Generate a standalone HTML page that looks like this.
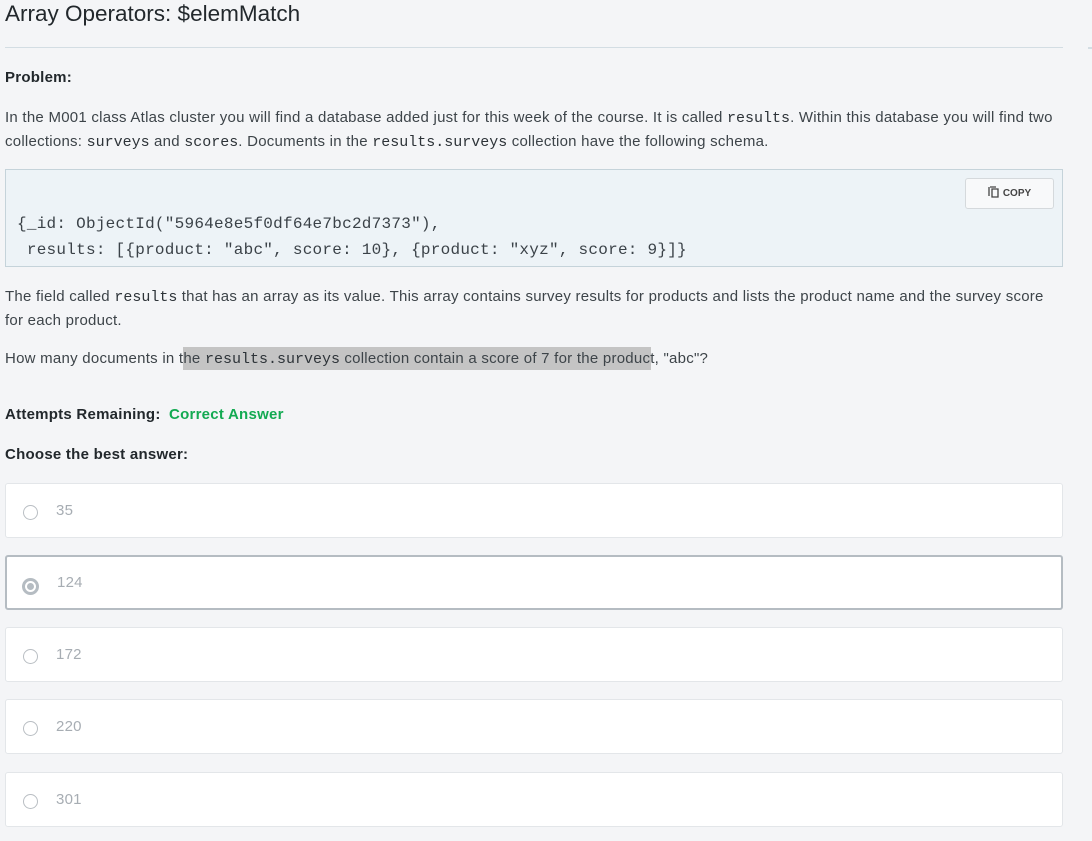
<!DOCTYPE html>
<html><head><style>
body{margin:0;width:1092px;height:841px;background:#f4f5f7;font-family:"Liberation Sans",sans-serif;color:#3d4449;position:relative;overflow:hidden;font-size:15px;letter-spacing:0.25px}
.a{position:absolute;white-space:nowrap}
code{font-family:"Liberation Mono",monospace;font-size:15px;color:#2d3338;letter-spacing:0;line-height:1}
.opt{position:absolute;left:5px;width:1058px;height:55px;background:#fff;border:1px solid #e3e6e9;border-radius:3px;box-sizing:border-box}
.opt .r{position:absolute;left:17px;top:21px;width:15px;height:15px;border:1px solid #b9bec3;border-radius:50%;box-sizing:border-box}
.opt .t{position:absolute;left:50px;top:18px;color:#a7adb3;font-size:15px}
</style></head><body>
<div class="a" style="left:5px;top:1px;font-size:22.5px;color:#22282c;letter-spacing:0">Array Operators: $elemMatch</div>
<div class="a" style="left:5px;top:47px;width:1058px;height:1px;background:#d3dde3"></div>
<div class="a" style="left:1088px;top:47px;width:4px;height:2px;background:#d3dde3"></div>
<div class="a" style="left:5px;top:69px;font-weight:bold;color:#22282c">Problem:</div>
<div class="a" style="left:5px;top:106px;line-height:24px">In the M001 class Atlas cluster you will find a database added just for this week of the course. It is called <code>results</code>. Within this database you will find two<br>collections: <code>surveys</code> and <code>scores</code>. Documents in the <code>results.surveys</code> collection have the following schema.</div>
<div class="a" style="left:5px;top:169px;width:1058px;height:98px;background:#edf3f7;border:1px solid #c5d3da;box-sizing:border-box"></div>
<div class="a" style="left:965px;top:178px;width:89px;height:31px;background:#f8f9fa;border:1px solid #d5d9dc;border-radius:3px;box-sizing:border-box;font-size:10px;font-weight:bold;color:#444;text-align:center;line-height:29px;letter-spacing:0">
<svg width="11" height="12" style="vertical-align:-2px;margin-right:4px"><path d="M2 1h6M1 1v9M4 3h6v8h-6z" stroke="#444" fill="none" stroke-width="1.3"/></svg>COPY</div>
<div class="a" style="left:17px;top:211px;line-height:25px"><code style="font-size:16px;color:#3b4248;line-height:25px;letter-spacing:0.25px">{_id: ObjectId("5964e8e5f0df64e7bc2d7373"),<br>&nbsp;results: [{product: "abc", score: 10}, {product: "xyz", score: 9}]}</code></div>
<div class="a" style="left:5px;top:285px;line-height:24px">The field called <code>results</code> that has an array as its value. This array contains survey results for products and lists the product name and the survey score<br>for each product.</div>
<div class="a" style="left:183px;top:347px;width:468px;height:23px;background:#c4c4c4"></div>
<div class="a" style="left:5px;top:350px">How many documents in the <code>results.surveys</code> collection contain a score of 7 for the product, "abc"?</div>
<div class="a" style="left:5px;top:406px;font-weight:bold;color:#22282c">Attempts Remaining: <span style="color:#13aa52;margin-left:4px">Correct Answer</span></div>
<div class="a" style="left:5px;top:446px;font-weight:bold;color:#22282c">Choose the best answer:</div>
<div class="opt" style="top:483px"><div class="r"></div><div class="t">35</div></div>
<div class="opt" style="top:555px;border:2px solid #b5bcc2;height:55px"><div class="r" style="left:15px;top:21px;width:17px;height:17px;border:3px solid #b5bcc2"><div style="position:absolute;left:2px;top:2px;width:7px;height:7px;border-radius:50%;background:#b5bcc2"></div></div><div class="t" style="left:50px;top:17px">124</div></div>
<div class="opt" style="top:627px"><div class="r"></div><div class="t">172</div></div>
<div class="opt" style="top:699px"><div class="r"></div><div class="t">220</div></div>
<div class="opt" style="top:772px"><div class="r"></div><div class="t">301</div></div>
</body></html>
